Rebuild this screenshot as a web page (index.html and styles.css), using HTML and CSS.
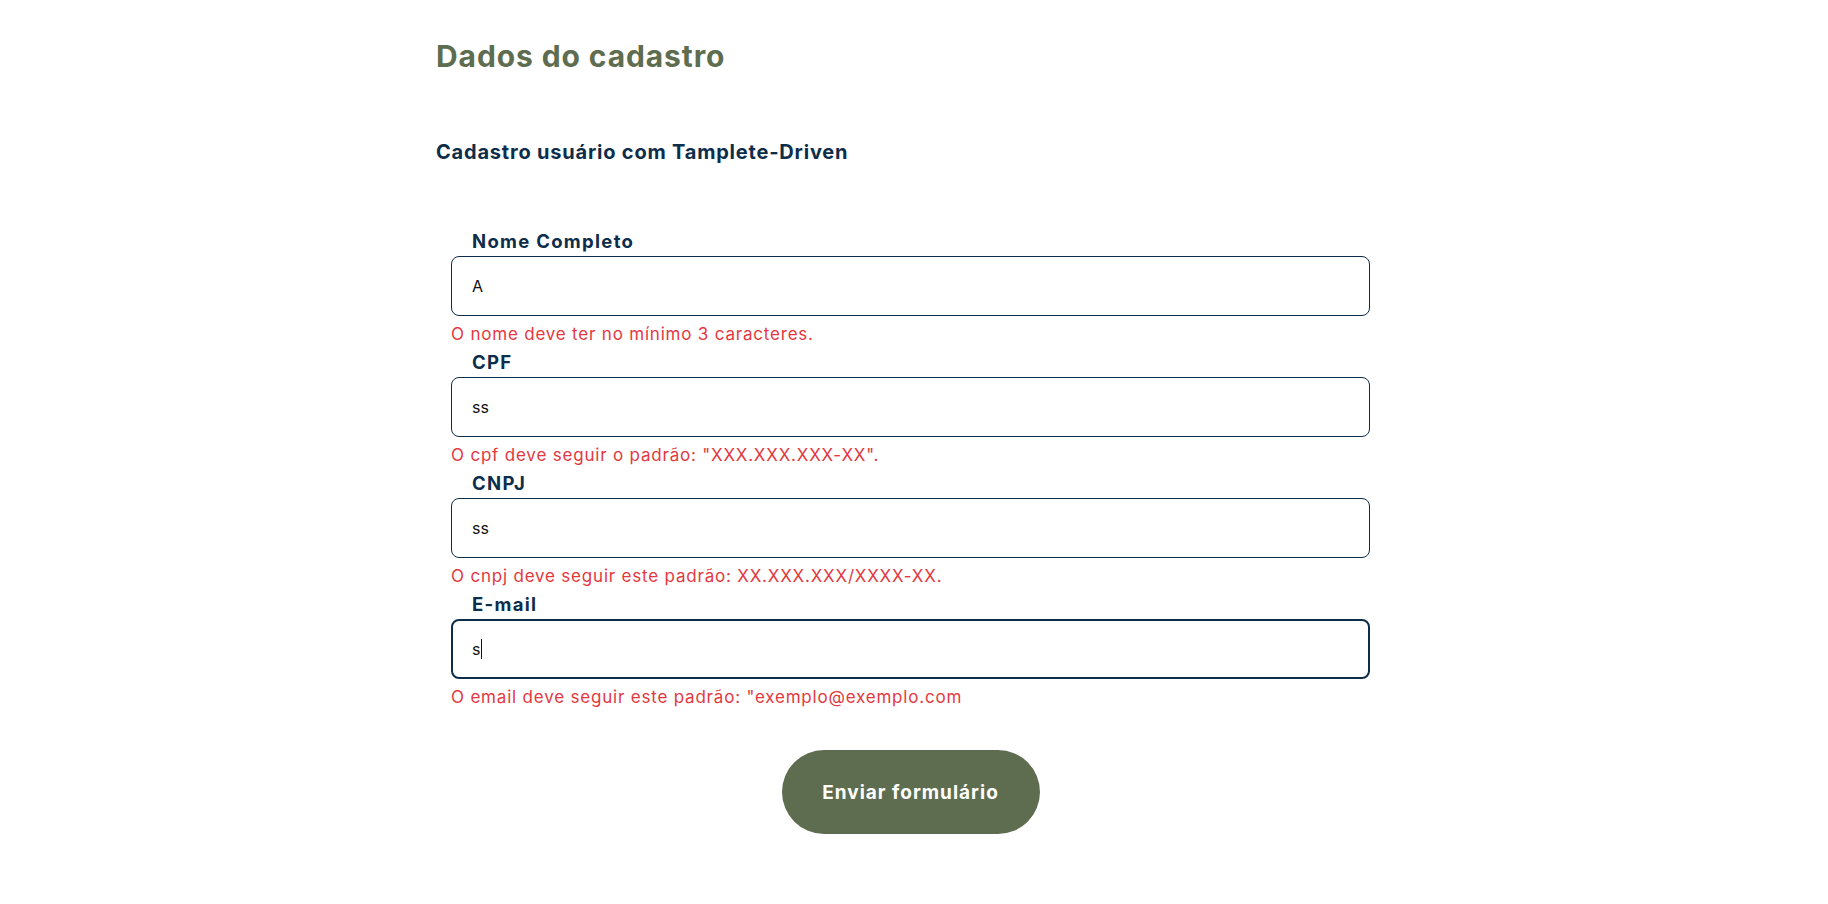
FILE: index.html
```html
<!DOCTYPE html>
<html lang="pt-BR">
<head>
<meta charset="utf-8">
<title>Dados do cadastro</title>
<link rel="stylesheet" href="styles.css">
</head>
<body>
<main class="page">
  <h1 class="title">Dados do cadastro</h1>
  <h2 class="subtitle">Cadastro usuário com Tamplete-Driven</h2>
  <form class="form">
    <div class="field">
      <label class="label" for="nome">Nome Completo</label>
      <input class="input" id="nome" type="text" value="A">
      <p class="error">O nome deve ter no mínimo 3 caracteres.</p>
    </div>
    <div class="field">
      <label class="label" for="cpf">CPF</label>
      <input class="input" id="cpf" type="text" value="ss">
      <p class="error">O cpf deve seguir o padrão: "XXX.XXX.XXX-XX".</p>
    </div>
    <div class="field">
      <label class="label" for="cnpj">CNPJ</label>
      <input class="input" id="cnpj" type="text" value="ss">
      <p class="error">O cnpj deve seguir este padrão: XX.XXX.XXX/XXXX-XX.</p>
    </div>
    <div class="field">
      <label class="label" for="email">E-mail</label>
      <div class="input-wrap">
        <input class="input input-focus" id="email" type="text" value="s">
        <span class="caret"></span>
      </div>
      <p class="error">O email deve seguir este padrão: "exemplo@exemplo.com</p>
    </div>
    <div class="actions">
      <button class="submit" type="button">Enviar formulário</button>
    </div>
  </form>
</main>
</body>
</html>
```
FILE: styles.css
```css
* { box-sizing: border-box; }
html, body { margin: 0; padding: 0; background: #ffffff; }
body {
  font-family: Inter, "Noto Sans", "Liberation Sans", sans-serif;
  color: #0d2d4b;
}
.page {
  width: 956px;
  margin: 0 auto;
  padding-top: 36px;
}
.title {
  margin: 0;
  font-size: 30px;
  line-height: 40px;
  font-weight: 700;
  letter-spacing: 0.9px;
  color: #5e6d4f;
}
.subtitle {
  margin: 63px 0 0;
  font-size: 20px;
  line-height: 26px;
  font-weight: 700;
  letter-spacing: 0.8px;
  color: #0d2d4b;
}
.form {
  padding: 64px 0 0 15px;
  width: 934px;
}
.field {
  display: flex;
  flex-direction: column;
}
.label {
  display: block;
  padding-left: 21px;
  font-size: 18.5px;
  line-height: 24px;
  font-weight: 700;
  letter-spacing: 1.3px;
  color: #0d2d4b;
  margin-bottom: 3px;
}
.input-wrap { position: relative; }
.input {
  display: block;
  width: 919px;
  height: 60px;
  border: 1px solid #0d2d4b;
  border-radius: 8px;
  padding: 0 20px;
  font-family: Inter, "Noto Sans", "Liberation Sans", sans-serif;
  font-size: 16px;
  color: #111111;
  background: #ffffff;
  outline: none;
}
.input-focus {
  border: 2px solid #0d2d4b;
  padding: 0 19px;
}
.caret {
  position: absolute;
  left: 30px;
  top: 20px;
  width: 1px;
  height: 20px;
  background: #111111;
}
.error {
  margin: 6px 0 4px;
  font-size: 17px;
  line-height: 24px;
  letter-spacing: 0.8px;
  color: #e4383f;
}
.actions {
  display: flex;
  justify-content: center;
  width: 919px;
  padding-top: 37px;
}
.submit {
  width: 258px;
  height: 84px;
  border: none;
  border-radius: 42px;
  background: #5e6d4f;
  color: #ffffff;
  font-family: Inter, "Noto Sans", "Liberation Sans", sans-serif;
  font-size: 19px;
  font-weight: 700;
  letter-spacing: 1px;
  cursor: pointer;
}
```
